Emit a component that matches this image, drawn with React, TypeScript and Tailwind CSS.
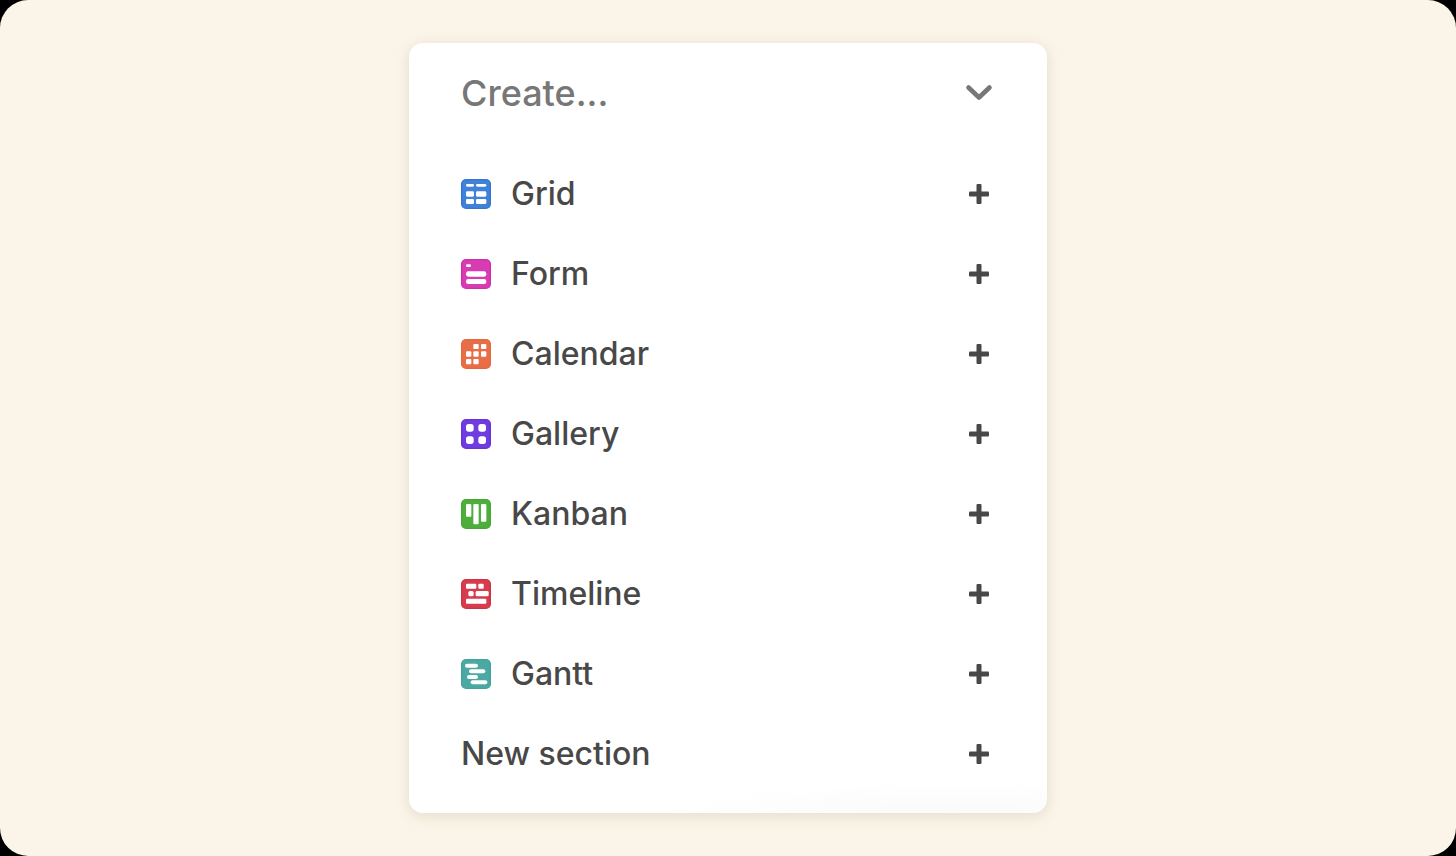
import { useState } from "react";

// x, y, width, height, corner radius on a 90-unit tile
type Block = [number, number, number, number, number];

type ViewType = { name: string; tile: string; blocks: Block[] };

const viewTypes: ViewType[] = [
  {
    name: "Grid",
    tile: "fill-[#3f82d8] stroke-[#3577cf]",
    blocks: [
      [15, 15, 24, 8, 4],
      [45, 15, 31, 8, 4],
      [15, 37, 24, 16, 4],
      [45, 37, 31, 16, 4],
      [15, 60, 24, 15, 4],
      [45, 60, 31, 15, 4],
    ],
  },
  {
    name: "Form",
    tile: "fill-[#d93bb3] stroke-[#cf30a8]",
    blocks: [
      [15, 16, 15, 8, 4],
      [15, 37, 61, 16, 7],
      [15, 60, 61, 15, 7],
    ],
  },
  {
    name: "Calendar",
    tile: "fill-[#e76e47] stroke-[#e4693f]",
    blocks: [
      [37, 15, 16, 15, 3],
      [60, 15, 16, 15, 3],
      [15, 37, 16, 16, 3],
      [37, 37, 16, 16, 3],
      [60, 37, 16, 16, 3],
      [15, 60, 16, 16, 3],
      [37, 60, 16, 16, 3],
    ],
  },
  {
    name: "Gallery",
    tile: "fill-[#6f3ce0] stroke-[#6833d9]",
    blocks: [
      [15, 15, 23, 23, 8],
      [52, 15, 23, 23, 8],
      [15, 52, 23, 23, 8],
      [52, 52, 23, 23, 8],
    ],
  },
  {
    name: "Kanban",
    tile: "fill-[#4eae3c] stroke-[#45a734]",
    blocks: [
      [15, 15, 16, 38, 3],
      [37, 15, 16, 61, 3],
      [60, 15, 16, 53, 3],
    ],
  },
  {
    name: "Timeline",
    tile: "fill-[#d63c4e] stroke-[#cc3445]",
    blocks: [
      [15, 14, 31, 15, 3],
      [52, 14, 16, 15, 3],
      [22, 36, 16, 16, 5],
      [44, 36, 39, 16, 4],
      [15, 59, 61, 15, 3],
    ],
  },
  {
    name: "Gantt",
    tile: "fill-[#4ba8a3] stroke-[#44a29d]",
    blocks: [
      [12, 14, 39, 12, 6],
      [24, 31, 49, 12, 6],
      [18, 48, 33, 12, 6],
      [29, 64, 50, 12, 6],
    ],
  },
];

function ViewIcon({ view }: { view: ViewType }) {
  return (
    <svg viewBox="0 0 90 90" className="size-[30px] shrink-0" aria-hidden="true">
      <rect x="2" y="2" width="86" height="86" rx="13" strokeWidth="4" className={view.tile} />
      {view.blocks.map(([x, y, width, height, r], i) => (
        <rect key={i} x={x} y={y} width={width} height={height} rx={r} fill="white" />
      ))}
    </svg>
  );
}

function PlusIcon() {
  return (
    <svg viewBox="0 0 28 28" className="size-7 shrink-0 fill-[#484848]" aria-hidden="true">
      <rect x="4" y="11.5" width="20" height="5" rx="1" />
      <rect x="11.5" y="4" width="5" height="20" rx="1" />
    </svg>
  );
}

function CreateRow({ label, view }: { label: string; view?: ViewType }) {
  return (
    <li>
      <button type="button" className="flex h-20 w-full items-center gap-5 text-left">
        {view && <ViewIcon view={view} />}
        <span className="grow">{label}</span>
        <PlusIcon />
      </button>
    </li>
  );
}

export default function App() {
  const [open, setOpen] = useState(true);

  return (
    <div className="min-h-screen bg-black font-['Inter',sans-serif] [font-variant-ligatures:none]">
      <main className="flex min-h-screen items-center justify-center rounded-[28px] bg-[#fbf4e8] p-10">
        <section className="w-full max-w-[638px] rounded-[14px] bg-white bg-[radial-gradient(ellipse_45%_4%_at_85%_100%,#fafafa,#ffffff)] pr-[54px] pb-[19px] pl-[52px] shadow-[0_3px_14px_rgba(100,110,60,0.16)]">
          <button
            type="button"
            aria-expanded={open}
            onClick={() => setOpen(!open)}
            className="mb-[11px] flex h-25 w-full items-center justify-between text-4xl font-medium text-[#777777]"
          >
            Create...
            <svg viewBox="0 0 28 28" className="size-7" fill="none" aria-hidden="true">
              <path
                d="M3.5 8.5 14 18.5 24.5 8.5"
                stroke="currentColor"
                strokeWidth="4.6"
                strokeLinecap="round"
                strokeLinejoin="round"
              />
            </svg>
          </button>
          {open && (
            <ul className="text-[32px] font-medium text-[#484848]">
              {viewTypes.map((view) => (
                <CreateRow key={view.name} label={view.name} view={view} />
              ))}
              <CreateRow label="New section" />
            </ul>
          )}
        </section>
      </main>
    </div>
  );
}
